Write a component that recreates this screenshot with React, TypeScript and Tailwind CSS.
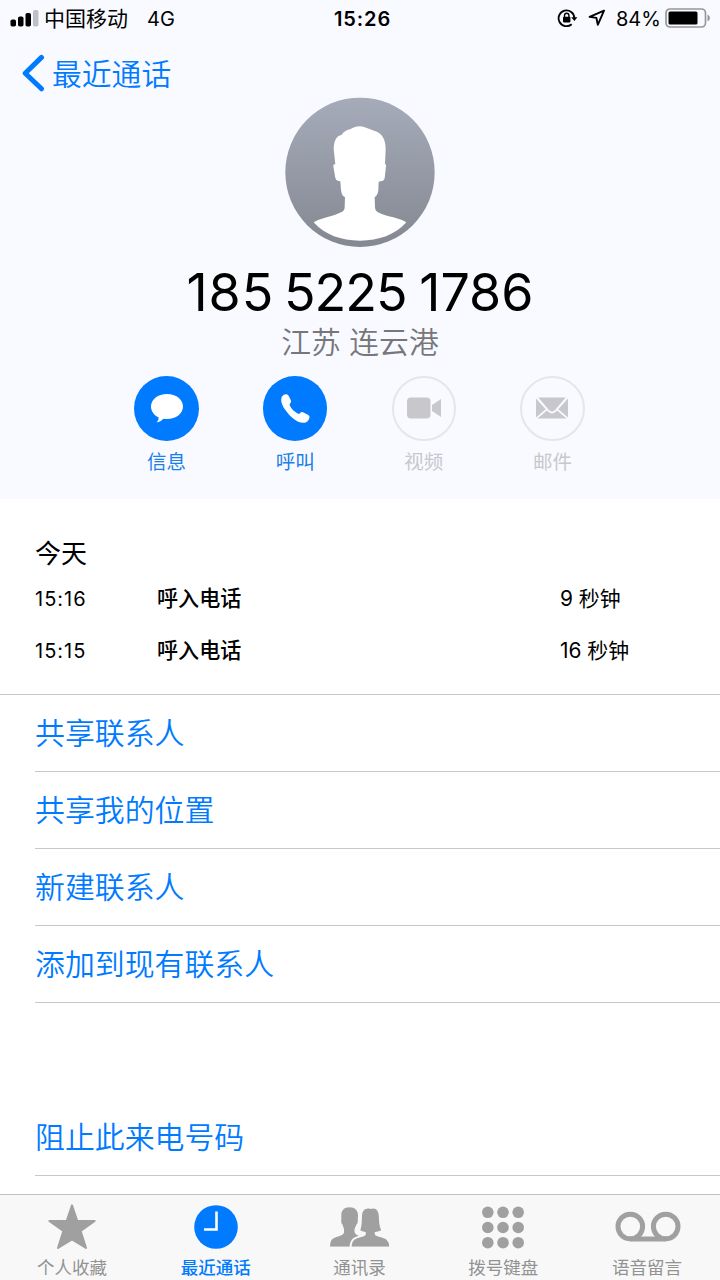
import React from 'react';

const calls = [
  { time: '15:16', kind: '呼入电话', length: '9 秒钟' },
  { time: '15:15', kind: '呼入电话', length: '16 秒钟' },
];

const actions = ['共享联系人', '共享我的位置', '新建联系人', '添加到现有联系人'];

function StatusBar() {
  return (
    <div className="flex h-9 items-center pt-px text-[19.5px] leading-none text-black">
      <svg className="ml-[10px] h-[18px] w-[30px]" viewBox="0 0 30 18">
        <rect x="0.5" y="9.5" width="5.5" height="7" rx="1.8" />
        <rect x="8" y="6.5" width="5.5" height="10" rx="1.8" />
        <rect x="15.5" y="3" width="5.5" height="13.5" rx="1.8" />
        <rect x="23" y="0" width="5.5" height="16.5" rx="1.8" fill="#bfc0c6" />
      </svg>
      <span className="ml-[4px] w-[103px] whitespace-nowrap text-[21px]">中国移动</span>
      <span className="w-[187px] text-[20px]">4G</span>
      <span className="w-[223px] text-[20px] font-semibold tracking-[0.9px]">15:26</span>
      <svg className="mb-[2px] h-[20px] w-[22px]" viewBox="0 0 22 20" fill="none" stroke="#000" strokeWidth="1.8">
        <path d="M14.7 16.2A7.9 7.9 0 1 1 17.4 10" />
        <path d="M14.2 9.2H20.4L17.4 13Z" fill="#000" stroke="none" />
        <rect x="6" y="8.8" width="7.4" height="5.6" rx="0.8" fill="#000" stroke="none" />
        <path d="M7.5 9V7.4a2.2 2.2 0 0 1 4.4 0V9" strokeWidth="1.4" />
      </svg>
      <svg className="mb-px ml-[9px] h-[18px] w-[18px]" viewBox="0 0 18 18" fill="none" stroke="#000" strokeWidth="1.9" strokeLinejoin="round">
        <path d="M16 1.6L1.6 7.9L8.4 8.9L9.8 15.8Z" />
      </svg>
      <span className="ml-[10px] w-[49px] whitespace-nowrap text-[20px]">84%</span>
      <svg className="mb-[2px] h-[20px] w-[46px]" viewBox="0 0 46 20">
        <rect x="1" y="1" width="39.5" height="18" rx="4" fill="none" stroke="#96979c" strokeWidth="1.7" />
        <rect x="3.5" y="3.5" width="29" height="13" rx="1.6" />
        <path d="M42.5 6.5q2.5 1.2 2.5 3.5t-2.5 3.5Z" fill="#96979c" />
      </svg>
    </div>
  );
}

function Avatar() {
  return (
    <svg className="h-[150px] w-[150px]" viewBox="0 0 450 450">
      <defs>
        <linearGradient id="avatarFill" x1="0" y1="0" x2="0" y2="1">
          <stop offset="0" stopColor="#a5abb9" />
          <stop offset="1" stopColor="#848892" />
        </linearGradient>
      </defs>
      <circle cx="225" cy="226" r="224" fill="url(#avatarFill)" />
      <path
        fill="#fff"
        d="M225 88C238 88 252 97 267 101C292 108 302 128 302 156L300 202Q304 200 303 208L299 243Q297 253 286 253L281 254L280 279Q279 294 269 301L270 330Q271 343 279 346Q296 355 325 361Q348 367 364 376C330 414 282 431 225 431C168 431 120 414 86 376Q102 367 125 361Q154 353 170 345Q179 341 179 330L180 301Q170 297 168 279L166 253L160 252Q153 251 151 243L145 208Q145 200 151 202L146 156C147 130 154 117 170 113Q178 101 195 97C207 92 212 88 225 88Z"
      />
    </svg>
  );
}

function Shortcut({ label, active, children }: { label: string; active?: boolean; children: React.ReactNode }) {
  return (
    <button className="flex w-[128.6px] flex-col items-center">
      <span
        className={
          active
            ? 'flex size-[64.5px] items-center justify-center rounded-full bg-[#007aff] text-white'
            : 'flex size-[64.5px] items-center justify-center rounded-full border-2 border-[#e5e5ea] text-[#c7c7cc]'
        }
      >
        {children}
      </span>
      <span className={active ? 'mt-[5px] text-[19.5px] leading-8 text-[#1a7fe8]' : 'mt-[5px] text-[19.5px] leading-8 text-[#c7c7cc]'}>
        {label}
      </span>
    </button>
  );
}

function Tab({ label, active, children }: { label: string; active?: boolean; children: React.ReactNode }) {
  return (
    <button className={active ? 'flex w-[143.8px] flex-col items-center font-medium text-[#007aff]' : 'flex w-[143.8px] flex-col items-center text-[#929292]'}>
      <span className="flex h-[63px] items-center justify-center pt-px">{children}</span>
      <span className="whitespace-nowrap text-[17.5px] leading-[20px]">{label}</span>
    </button>
  );
}

export default function App() {
  return (
    <div className="flex h-[1280px] w-[720px] flex-col overflow-hidden bg-white font-['Inter','Noto_Sans_CJK_SC',sans-serif] text-black">
      <header className="flex h-[499px] flex-col bg-[#f9faff]">
        <StatusBar />
        <nav className="flex h-[61px] items-start pt-[15px] text-[#007aff]">
          <svg className="mt-[3px] ml-[21px] h-[38px] w-[24px]" viewBox="0 0 24 38" fill="none" stroke="currentColor" strokeWidth="5" strokeLinecap="round" strokeLinejoin="round">
            <path d="M20.500 3.400L4.200 19.200L20.500 34.800" />
          </svg>
          <span className="ml-[7px] font-['Inter','Noto_Sans_CJK_SC_DemiLight','Noto_Sans_CJK_SC',sans-serif] text-[29.8px] leading-[46px]">最近通话</span>
        </nav>
        <div className="flex flex-col items-center">
          <Avatar />
          <h1 className="h-[76px] whitespace-nowrap text-[52px] leading-[92px] [word-spacing:-3px]">
            <span className="tracking-[1px]">185</span> <span className="mr-px -ml-[2px] tracking-[-1px]">5225</span> <span>1786</span>
          </h1>
          <p className="h-[53px] whitespace-nowrap font-['Inter','Noto_Sans_CJK_SC_DemiLight','Noto_Sans_CJK_SC',sans-serif] text-[29.8px] leading-[38px] text-[#77777b]">江苏 连云港</p>
        </div>
        <div className="flex justify-center pr-px">
          <Shortcut label="信息" active>
            <svg className="h-[30px] w-[34px]" viewBox="0 0 34 30" fill="currentColor">
              <path d="M17 1C26 1 33 6.400 33 13.500S26 26 17 26C15.500 26 14.300 25.900 13.200 25.700C11.500 27.800 9.500 29 6.600 29.200C8.400 27.700 8.800 26 8.500 24.300C4 22.200 1 18.200 1 13.500C1 6.400 8 1 17 1Z" />
            </svg>
          </Shortcut>
          <Shortcut label="呼叫" active>
            <svg className="h-[31px] w-[31px]" viewBox="0 0 31 31" fill="currentColor">
              <path d="M2 3.500Q4 .8 6.500 1.200Q7.800 1.300 8.600 2.800L11 7.500Q11.500 9 10.300 10.200Q9 11.300 10 13C12 16.500 14.500 18.700 17.700 20.600Q19.200 21.300 20.200 20Q21.300 18.500 23 19.200L28.300 22Q30 23 29.400 25Q28.200 29 24.500 29.800C17 30.500 9.500 23 5 16.500C1.500 11.500 .3 7 2 3.500Z" />
            </svg>
          </Shortcut>
          <Shortcut label="视频">
            <svg className="h-[22px] w-[36px]" viewBox="0 0 36 22" fill="currentColor">
              <rect x="1" y="0.5" width="23.500" height="21" rx="4" />
              <path d="M26 8L35 2V20L26 14Z" />
            </svg>
          </Shortcut>
          <Shortcut label="邮件">
            <svg className="h-[22px] w-[32px]" viewBox="0 0 32 22" fill="currentColor">
              <path d="M2.200 .5H29.800L19 13Q16 16 13 13Z" />
              <path d="M0 1.500L9.700 12.200L0 20.500Z" />
              <path d="M32 1.500L22.300 12.200L32 20.500Z" />
              <path d="M1.500 21.500L11 13.500L12 14.600Q16 18.400 20 14.600L21 13.500L30.500 21.500Z" />
            </svg>
          </Shortcut>
        </div>
      </header>

      <section className="h-[196px] border-b border-[#c8c7cc] pt-[34px] pl-[35px]">
        <h2 className="h-[40px] text-[26px] leading-[41px]">今天</h2>
        {calls.map((call) => (
          <div key={call.time} className="flex h-[52px] items-center text-[20.9px]">
            <span className="w-[122px] text-[20px] tracking-[1px]">{call.time}</span>
            <span className="w-[403px] text-[21.1px] font-medium">{call.kind}</span>
            <span className="whitespace-nowrap">{call.length}</span>
          </div>
        ))}
      </section>

      <main className="flex flex-1 flex-col pl-[35px] font-['Inter','Noto_Sans_CJK_SC_DemiLight','Noto_Sans_CJK_SC',sans-serif] text-[29.9px] text-[#007aff]">
        {actions.map((label) => (
          <button key={label} className="flex h-[77px] items-center border-b border-[#c8c7cc] text-left">
            {label}
          </button>
        ))}
        <button className="mt-[96px] flex h-[77px] items-center border-b border-[#c8c7cc] text-left">阻止此来电号码</button>
      </main>

      <footer className="flex h-[86px] border-t border-[#c0c0c2] bg-[#f8f8f8]">
        <Tab label="个人收藏">
          <svg className="h-[46px] w-[48px]" viewBox="0 0 144 138" fill="#a0a0a0" stroke="#a0a0a0" strokeWidth="6" strokeLinejoin="round">
            <path d="M72 4L88 51H140L98 81L114 132L72 106L30 132L46 81L4 51H56Z" />
          </svg>
        </Tab>
        <Tab label="最近通话" active>
          <svg className="h-[44px] w-[44px]" viewBox="0 0 44 44">
            <circle cx="22" cy="22" r="21.800" fill="#007aff" />
            <path d="M22.500 6.500V24.500H10" fill="none" stroke="#fff" strokeWidth="2.600" />
          </svg>
        </Tab>
        <Tab label="通讯录">
          <svg className="ml-[2px] h-[42px] w-[60px]" viewBox="0 0 60 42" fill="#a0a0a0">
            <path d="M19.500 1.300C25 1.300 28 4.500 28 9.500L27.800 13Q28 17.500 26.500 18.500L24.500 23V26Q25 28.500 28 29.500L35 33L30 40.700H0Q0 35 2.500 33C5 30.500 13.500 30 14 26.500V23L12.500 18.500Q10.800 17.500 11.300 13V9.500C11.300 4.500 14 1.300 19.500 1.300Z" />
            <path stroke="#f8f8f8" strokeWidth="4" paintOrder="stroke" d="M40.500 3C46 1 48.500 5 48.800 9.500C49.200 16 49 19 51.200 24.200Q48 26 44.800 26V28.500C46 31 53.500 31 56.500 33.800Q59 36 59.200 40.700H21.600Q21.800 36 24.500 33.800C27 31 34.500 31.500 35.800 28.500V26Q33 26 30.300 24.200C32 19 31.800 15 32 9.500C32.300 4.500 35.500 1.500 40.500 3Z" />
            <path fill="#f8f8f8" d="M0 40.700H60V42H0Z" />
          </svg>
        </Tab>
        <Tab label="拨号键盘">
          <svg className="h-[43px] w-[44px]" viewBox="0 0 44 43" fill="#a0a0a0">
            {[6.3, 21.5, 36.7].map((y) => [6.8, 22, 37.2].map((x) => <circle key={`${x}-${y}`} cx={x} cy={y} r="5.800" />))}
          </svg>
        </Tab>
        <Tab label="语音留言">
          <svg className="ml-px h-[32px] w-[66px]" viewBox="0 0 66 32" fill="none" stroke="#a0a0a0" strokeWidth="5">
            <circle cx="15.300" cy="15.500" r="12.300" />
            <circle cx="50.700" cy="15.500" r="12.300" />
            <path d="M15.300 28H50.700" />
          </svg>
        </Tab>
      </footer>
    </div>
  );
}
